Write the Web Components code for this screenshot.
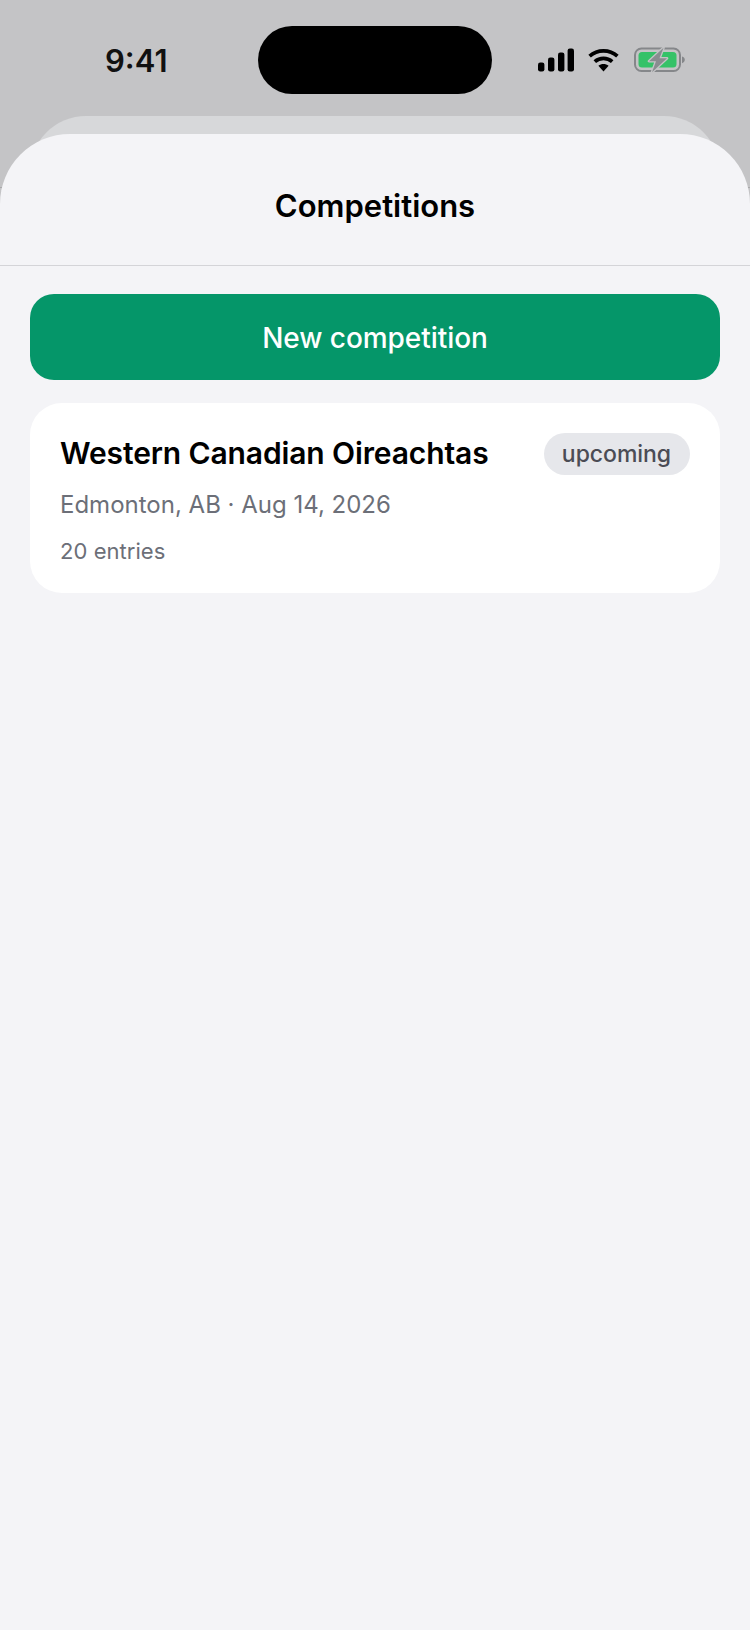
<!DOCTYPE html>
<html>
  <head>
    <title>Competitions</title>
    <meta charset="utf-8">
    <style>
      html, body {
        margin: 0;
        height: 100%;
      }
      body {
        /* thin line peeks out beside the sheet corners */
        background: linear-gradient(#c4c4c6 187px, #a9a9ab 187px, #a9a9ab 188px, #c4c4c6 188px);
        font-family: Inter, "Liberation Sans", sans-serif;
        overflow: hidden;
      }
    </style>
  </head>

  <body>
    <template id="status-bar-tpl">
      <style>
        :host {
          display: flex;
          align-items: center;
          justify-content: space-between;
          box-sizing: border-box;
          height: 94px;
          padding-top: 26px;
        }
        .time {
          width: 258px;
          box-sizing: border-box;
          padding: 0 0 0 105px;
          font-size: 31px;
          font-weight: 600;
          color: #111;
        }
        .island {
          width: 234px;
          height: 68px;
          border-radius: 34px;
          background: #000;
        }
        .icons {
          width: 258px;
          box-sizing: border-box;
          padding: 0 0 0 46px;
          display: flex;
          align-items: center;
          gap: 14px;
        }
        svg { display: block; }
      </style>
      <span class="time">9:41</span>
      <div class="island"></div>
      <div class="icons">
        <svg width="36" height="24" viewBox="0 0 36 24">
          <rect x="0" y="14.5" width="6.4" height="9" rx="2.2" fill="#000"/>
          <rect x="10" y="9.5" width="6.4" height="14" rx="2.2" fill="#000"/>
          <rect x="20" y="4.5" width="6.4" height="19" rx="2.2" fill="#000"/>
          <rect x="29.6" y="0.5" width="6.4" height="23" rx="2.2" fill="#000"/>
        </svg>
        <svg width="31" height="24" viewBox="0 0 31 24">
          <path d="M1.6 8.2C9.5 1 21.5 1 29.4 8.2" fill="none" stroke="#000" stroke-width="3.7"/>
          <path d="M6.8 13.6C11.8 9.2 19.2 9.2 24.2 13.6" fill="none" stroke="#000" stroke-width="3.7"/>
          <path d="M10.4 17.8C13.4 15.4 17.6 15.4 20.6 17.8L15.5 23.4Z" fill="#000"/>
        </svg>
        <svg width="52" height="26" viewBox="0 0 52 26" style="margin-left:1px">
          <rect x="1" y="1.5" width="45" height="22.5" rx="6.5" fill="none" stroke="#85878a" stroke-width="2"/>
          <rect x="4.5" y="5" width="38" height="15.5" rx="3.5" fill="#35c268"/>
          <path d="M48 9.5C50 10 50.8 11.2 50.8 12.8S50 15.6 48 16.2Z" fill="#85878a"/>
          <path d="M29.5 0.8L15 14.2H22L18 25.2L33 11.2H25.5Z" fill="#8a8c90" stroke="#c4c4c6" stroke-width="2.6" paint-order="stroke" stroke-linejoin="round"/>
        </svg>
      </div>
    </template>

    <template id="modal-sheet-tpl">
      <style>
        :host {
          display: block;
          position: relative;
          margin-top: 22px;
          padding-top: 18px;
          height: 1514px;
          box-sizing: border-box;
        }
        .back {
          position: absolute;
          top: 0;
          left: 30px;
          right: 30px;
          height: 60px;
          background: #d7d8da;
          border-radius: 56px 56px 0 0;
        }
        .front {
          position: relative;
          height: 100%;
          background: #f4f4f7;
          border-radius: 70px 70px 0 0;
        }
      </style>
      <div class="back"></div>
      <div class="front"><slot></slot></div>
    </template>

    <template id="sheet-header-tpl">
      <style>
        :host {
          display: flex;
          align-items: center;
          justify-content: center;
          height: 132px;
          padding-top: 12px;
          box-sizing: border-box;
          border-bottom: 1px solid #d4d4d8;
          font-size: 31px;
          font-weight: 600;
          color: #000;
        }
      </style>
      <slot></slot>
    </template>

    <template id="primary-button-tpl">
      <style>
        :host {
          display: flex;
          align-items: center;
          justify-content: center;
          height: 86px;
          padding-top: 1px;
          box-sizing: border-box;
          border-radius: 24px;
          background: #059669;
          color: #fff;
          font-size: 28px;
          font-weight: 500;
          letter-spacing: -0.05px;
        }
      </style>
      <slot></slot>
    </template>

    <template id="competition-card-tpl">
      <style>
        :host {
          display: block;
          background: #fff;
          border-radius: 32px;
          padding: 30px;
          height: 190px;
          box-sizing: border-box;
        }
        .top {
          display: flex;
          align-items: center;
          justify-content: space-between;
          height: 42px;
        }
        .name {
          margin-bottom: 2px;
          font-size: 30px;
          font-weight: 600;
          letter-spacing: -0.12px;
          color: #000;
        }
        .meta {
          margin-top: 13px;
          font-size: 24px;
          line-height: 34px;
          color: #6c6f78;
        }
        .entries {
          margin-top: 13px;
          font-size: 22px;
          line-height: 32px;
          letter-spacing: 0.05px;
          color: #6c6f78;
        }
      </style>
      <div class="top">
        <span class="name"><slot name="name"></slot></span>
        <slot name="badge"></slot>
      </div>
      <div class="meta"><slot name="meta"></slot></div>
      <div class="entries"><slot name="entries"></slot></div>
    </template>

    <template id="status-pill-tpl">
      <style>
        :host {
          display: flex;
          align-items: center;
          height: 42px;
          padding: 0 19px 0 18px;
          border-radius: 21px;
          background: #e6e7eb;
          color: #4b4c55;
          font-size: 23px;
          font-weight: 500;
          letter-spacing: -0.05px;
        }
      </style>
      <slot></slot>
    </template>

    <template id="competitions-list-tpl">
      <style>
        :host {
          display: flex;
          flex-direction: column;
          gap: 23px;
          padding: 28px 30px;
        }
      </style>
      <slot></slot>
    </template>

    <status-bar></status-bar>
    <modal-sheet>
      <sheet-header>Competitions</sheet-header>
      <competitions-list>
        <primary-button>New competition</primary-button>
        <competition-card>
          <span slot="name">Western Canadian Oireachtas</span>
          <status-pill slot="badge">upcoming</status-pill>
          <span slot="meta">Edmonton, AB · Aug 14, 2026</span>
          <span slot="entries">20 entries</span>
        </competition-card>
      </competitions-list>
    </modal-sheet>

    <script>
      // every element here is just a template in an open shadow root
      function defineFromTemplate(tag, templateId) {
        let template = document.getElementById(templateId);
        customElements.define(tag, class extends HTMLElement {
          constructor() {
            super();
            this.attachShadow({ mode: 'open' }).appendChild(template.content.cloneNode(true));
          }
        });
      }

      defineFromTemplate('status-bar', 'status-bar-tpl');
      defineFromTemplate('modal-sheet', 'modal-sheet-tpl');
      defineFromTemplate('sheet-header', 'sheet-header-tpl');
      defineFromTemplate('primary-button', 'primary-button-tpl');
      defineFromTemplate('competition-card', 'competition-card-tpl');
      defineFromTemplate('status-pill', 'status-pill-tpl');
      defineFromTemplate('competitions-list', 'competitions-list-tpl');
    </script>
  </body>
</html>
